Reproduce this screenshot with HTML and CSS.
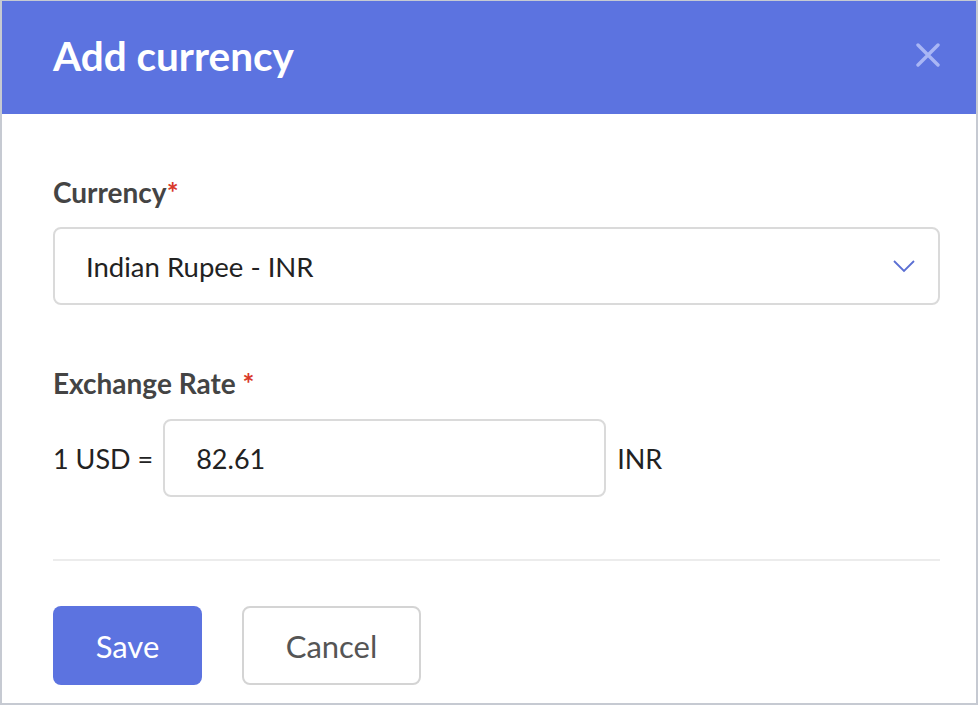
FILE: index.html
```html
<!DOCTYPE html>
<html>
<head>
    <title>Add currency</title>
    <link rel="stylesheet" href="styles.css">
</head>
<body>
<div class="modal">
    <div class="modal-header">
        <h1 class="modal-title">Add currency</h1>
        <span class="close-btn">
            <svg width="24" height="24" viewBox="0 0 24 24">
                <path d="M2 2 L22 22 M22 2 L2 22" stroke="#a9b6f5" stroke-width="3.4" stroke-linecap="round" fill="none"/>
            </svg>
        </span>
    </div>
    <form class="modal-body">
        <label class="field-label">Currency<span class="req">*</span></label>
        <div class="select-box">
            <span>Indian Rupee - INR</span>
            <svg width="22" height="13" viewBox="0 0 22 13">
                <path d="M1 1 L11 11 L21 1" stroke="#5b6fd3" stroke-width="1.8" fill="none"/>
            </svg>
        </div>
        <label class="field-label second">Exchange Rate <span class="req">*</span></label>
        <div class="rate-row">
            <span class="rate-prefix">1 USD =</span>
            <div class="text-input">82.61</div>
            <span class="rate-suffix">INR</span>
        </div>
        <div class="divider"></div>
        <div class="actions">
            <button type="submit" class="btn btn-primary">Save</button>
            <button type="button" class="btn btn-default">Cancel</button>
        </div>
    </form>
</div>
</body>
</html>
```

FILE: styles.css
```css
body {
    margin: 0;
    font-family: Lato, "Open Sans", sans-serif;
    background: #fff;
}

.modal {
    box-sizing: border-box;
    width: 978px;
    height: 705px;
    border: 2px solid #c6cad2;
    border-top-width: 1px;
    background: #fff;
}

.modal-header {
    height: 113px;
    background-color: #5c73e0;
    display: flex;
    align-items: center;
    justify-content: space-between;
    padding: 0 36px 0 51px;
}

.modal-title {
    margin: 0;
    color: #fff;
    font-size: 40.5px;
    font-weight: 700;
    line-height: 48px;
    margin-top: -4px;
}

.close-btn {
    display: flex;
    margin-top: -6px;
}

.modal-body {
    padding: 0 36px 0 51px;
}

.field-label {
    display: block;
    margin-top: 62px;
    font-size: 28px;
    font-weight: 700;
    line-height: 32px;
    color: #444;
}

.req {
    color: #d9382a;
}

.select-box {
    box-sizing: border-box;
    height: 78px;
    margin-top: 19px;
    border: 2px solid #dadada;
    border-radius: 8px;
    display: flex;
    align-items: center;
    justify-content: space-between;
    padding: 0 23px 0 31px;
    font-size: 27.5px;
    color: #222;
}

.rate-row {
    display: flex;
    align-items: center;
    margin-top: 20px;
    font-size: 27px;
    color: #222;
}

.text-input {
    box-sizing: border-box;
    width: 443px;
    height: 78px;
    margin: 0 11px 0 10px;
    border: 2px solid #dadada;
    border-radius: 8px;
    display: flex;
    align-items: center;
    padding-left: 31px;
}

.divider {
    height: 2px;
    margin-top: 62px;
    background: #ececec;
}

.actions {
    display: flex;
    gap: 40px;
    margin-top: 45px;
}

.btn {
    box-sizing: border-box;
    height: 79px;
    border-radius: 8px;
    font-family: Lato, "Open Sans", sans-serif;
    font-size: 31px;
    cursor: pointer;
}

.btn-primary {
    width: 149px;
    background: #5c73e0;
    border: none;
    color: #fff;
}

.btn-default {
    width: 179px;
    background: #fff;
    border: 2px solid #d4d4d4;
    color: #555;
}
```
